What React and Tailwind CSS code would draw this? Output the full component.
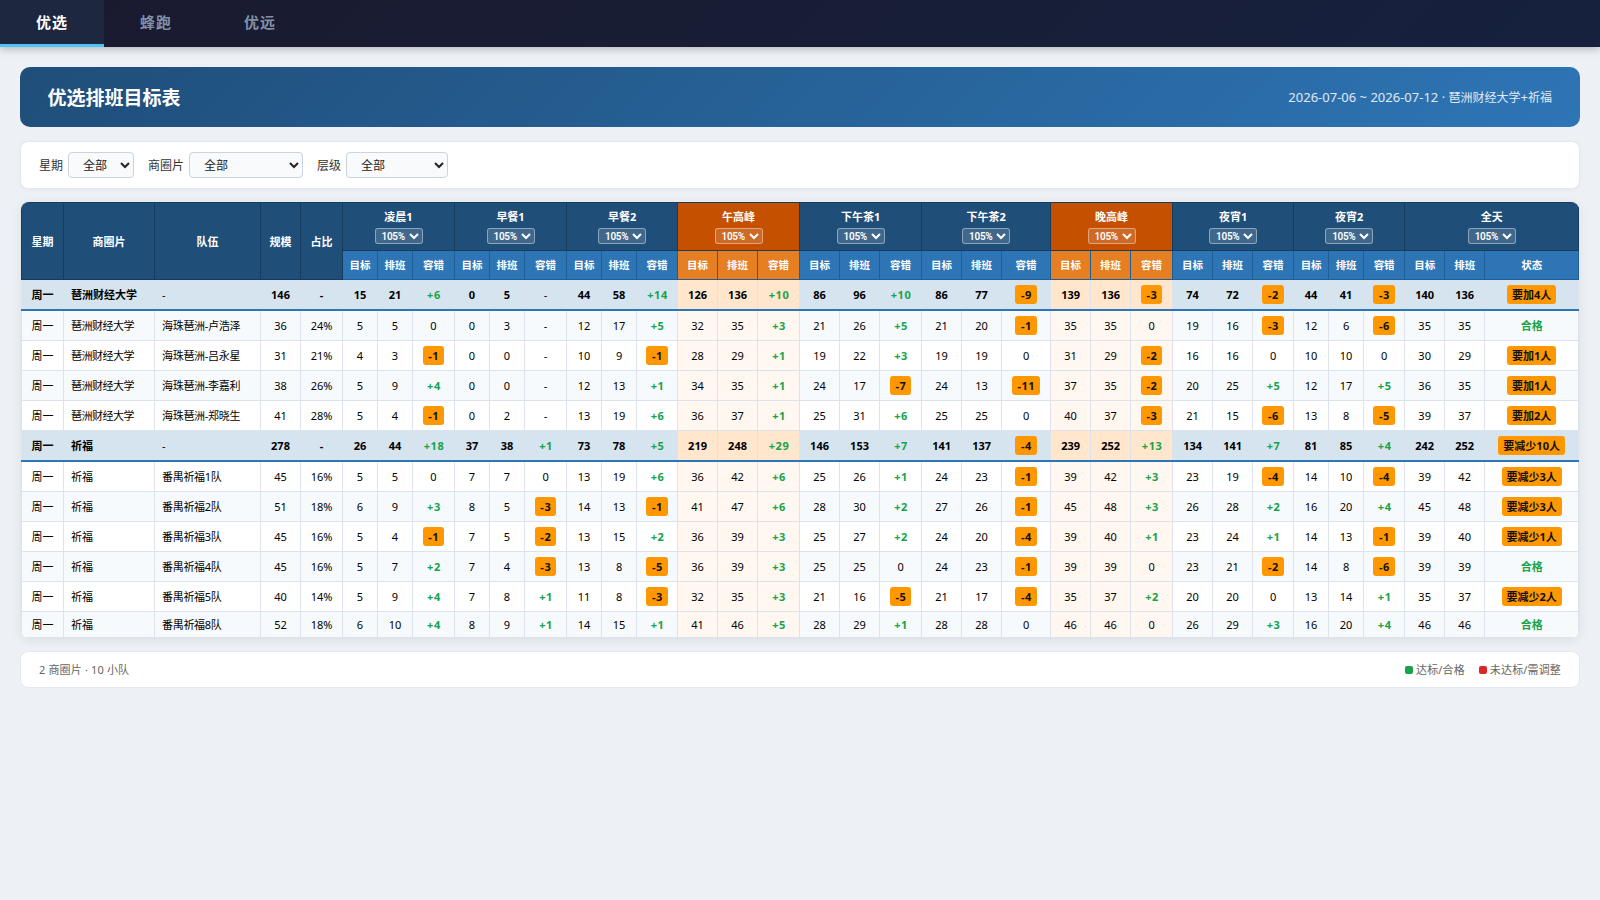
const PERIODS = [
  { name: '凌晨1', peak: false },
  { name: '早餐1', peak: false },
  { name: '早餐2', peak: false },
  { name: '午高峰', peak: true },
  { name: '下午茶1', peak: false },
  { name: '下午茶2', peak: false },
  { name: '晚高峰', peak: true },
  { name: '夜宵1', peak: false },
  { name: '夜宵2', peak: false },
];

const COLS = [
  42, 91, 106, 40, 42, 35, 35, 42, 35, 35, 42, 35, 35, 41, 40, 40, 42, 40, 40, 42, 40, 40, 49, 40, 40, 42, 40, 40, 41,
  35, 35, 41, 40, 40, 94,
];

const A = '琶洲财经大学';
const B = '祈福';

const ROWS = [
  [A, '-', '146', '-', '15 21 +6 0 5 - 44 58 +14 126 136 +10 86 96 +10 86 77 -9 139 136 -3 74 72 -2 44 41 -3 140 136', '要加4人'],
  [A, '海珠琶洲-卢浩泽', '36', '24%', '5 5 0 0 3 - 12 17 +5 32 35 +3 21 26 +5 21 20 -1 35 35 0 19 16 -3 12 6 -6 35 35', '合格'],
  [A, '海珠琶洲-吕永星', '31', '21%', '4 3 -1 0 0 - 10 9 -1 28 29 +1 19 22 +3 19 19 0 31 29 -2 16 16 0 10 10 0 30 29', '要加1人'],
  [A, '海珠琶洲-李嘉利', '38', '26%', '5 9 +4 0 0 - 12 13 +1 34 35 +1 24 17 -7 24 13 -11 37 35 -2 20 25 +5 12 17 +5 36 35', '要加1人'],
  [A, '海珠琶洲-郑晓生', '41', '28%', '5 4 -1 0 2 - 13 19 +6 36 37 +1 25 31 +6 25 25 0 40 37 -3 21 15 -6 13 8 -5 39 37', '要加2人'],
  [B, '-', '278', '-', '26 44 +18 37 38 +1 73 78 +5 219 248 +29 146 153 +7 141 137 -4 239 252 +13 134 141 +7 81 85 +4 242 252', '要减少10人'],
  [B, '番禺祈福1队', '45', '16%', '5 5 0 7 7 0 13 19 +6 36 42 +6 25 26 +1 24 23 -1 39 42 +3 23 19 -4 14 10 -4 39 42', '要减少3人'],
  [B, '番禺祈福2队', '51', '18%', '6 9 +3 8 5 -3 14 13 -1 41 47 +6 28 30 +2 27 26 -1 45 48 +3 26 28 +2 16 20 +4 45 48', '要减少3人'],
  [B, '番禺祈福3队', '45', '16%', '5 4 -1 7 5 -2 13 15 +2 36 39 +3 25 27 +2 24 20 -4 39 40 +1 23 24 +1 14 13 -1 39 40', '要减少1人'],
  [B, '番禺祈福4队', '45', '16%', '5 7 +2 7 4 -3 13 8 -5 36 39 +3 25 25 0 24 23 -1 39 39 0 23 21 -2 14 8 -6 39 39', '合格'],
  [B, '番禺祈福5队', '40', '14%', '5 9 +4 7 8 +1 11 8 -3 32 35 +3 21 16 -5 21 17 -4 35 37 +2 20 20 0 13 14 +1 35 37', '要减少2人'],
  [B, '番禺祈福8队', '52', '18%', '6 10 +4 8 9 +1 14 15 +1 41 46 +5 28 29 +1 28 28 0 46 46 0 26 29 +3 16 20 +4 46 46', '合格'],
];

const ROW_HEIGHTS = ['h-[30px]', 'h-[31px]', 'h-[30px]', 'h-[30px]', 'h-[30px]', 'h-[30px]', 'h-[31px]', 'h-[30px]', 'h-[30px]', 'h-[30px]', 'h-[30px]', 'h-[26px]'];

const NUDGED = [0, 1, 5, 6];

function Badge({ children }) {
  return (
    <span className="inline-block h-[19px] rounded-[3px] bg-[#ff9800] px-[5px] align-middle font-bold leading-[19px] text-[#111]">
      {children}
    </span>
  );
}

function Tolerance({ value }) {
  if (value.length > 1 && value[0] === '-')
    return (
      <Badge>
        <span className="ml-[0.5px] tracking-[0.5px]">{value}</span>
      </Badge>
    );
  if (value[0] === '+') return <span className="ml-[1px] font-bold tracking-[0.6px] text-[#16a34a]">{value}</span>;
  return <span className="font-normal">{value}</span>;
}

function PercentSelect() {
  return (
    <select className="block h-4 w-12 rounded-[3px] border border-white/40 bg-white/15 py-0 pr-0 pl-[2px] font-['Roboto',sans-serif] text-[10px] font-semibold leading-none tracking-[-0.3px] text-white">
      <option>105%</option>
    </select>
  );
}

function GroupHead({ name, peak }) {
  return (
    <th
      colSpan={3}
      className={'border border-[#163d5f] p-0 align-top font-bold ' + (peak ? 'bg-[#c55100]' : 'bg-[#1f4e79]')}
    >
      <div className="flex flex-col items-center gap-[3px] pt-[6px]">
        <span className="h-4 leading-4">{name}</span>
        <PercentSelect />
      </div>
    </th>
  );
}

function SubHead({ children, peak }) {
  return (
    <th
      className={
        'border border-[#1f5f99] p-0 text-center text-[10.5px] font-bold ' + (peak ? 'bg-[#e67e22]' : 'bg-[#2e75b6]')
      }
    >
      {children}
    </th>
  );
}

function DataRow({ row, index }) {
  const [area, team, size, share, values, status] = row;
  const summary = team === '-';
  const base =
    'border border-[#dde3ec] px-0 pb-0 text-center ' +
    (NUDGED.includes(index) ? 'pt-[1px] ' : 'pt-0 ') +
    (summary ? 'border-b-2 border-b-[#2e75b6] font-bold ' : '');
  const plain = summary ? 'bg-[#d6e4f0]' : index % 2 ? 'bg-[#f7fafd]' : 'bg-white';
  const peakBg = summary ? 'bg-[#ffe6cc]' : 'bg-[#fff7f0]';
  return (
    <tr className={ROW_HEIGHTS[index]}>
      <td className={base + plain}>周一</td>
      <td className={base + plain}>
        <div className={'pl-[7px] text-left ' + (area === A && !summary ? 'tracking-[-0.5px]' : '')}>{area}</div>
      </td>
      <td className={base + plain}>
        <div className="pl-[7px] text-left font-normal tracking-[-0.3px]">{team}</div>
      </td>
      <td className={base + plain}>{size}</td>
      <td className={base + plain}>{share}</td>
      {values.split(' ').map((v, i) => {
        const group = Math.floor(i / 3);
        const peak = group === 3 || group === 6;
        return (
          <td key={i} className={base + (peak ? peakBg : plain)}>
            {i % 3 === 2 ? <Tolerance value={v} /> : v}
          </td>
        );
      })}
      <td className={base + plain}>
        {status === '合格' ? <span className="font-bold text-[#16a34a]">{status}</span> : <Badge>{status}</Badge>}
      </td>
    </tr>
  );
}

function Filter({ label, width }) {
  return (
    <label className="flex items-center gap-[5px] text-[#333]">
      <span className="pt-[2px]">{label}</span>
      <select
        className={
          'h-[26px] rounded-[4px] border border-[#cbd2e0] bg-[#f9fafc] px-[10px] text-xs text-[#222] ' + width
        }
      >
        <option>全部</option>
      </select>
    </label>
  );
}

export default function App() {
  const tabs = ['优选', '蜂跑', '优远'];
  return (
    <div className="min-h-screen bg-[#edf0f5] font-['Noto_Sans','Noto_Sans_CJK_SC',sans-serif] text-black">
      <nav className="relative flex h-[47px] bg-[linear-gradient(135deg,#1a1a2e,#16213e)] shadow-[0_2px_8px_rgba(0,0,0,0.25)]">
        {tabs.map((tab, i) => (
          <div
            key={tab}
            className={
              'flex w-[104px] items-center justify-center border-b-[3px] text-[15px] font-semibold tracking-[1px] ' +
              (i === 0
                ? 'border-[#4fc3f7] bg-[#1e2740] text-white'
                : 'border-transparent text-[#8090a8]')
            }
          >
            {tab}
          </div>
        ))}
      </nav>
      <main className="flex flex-col px-5 pt-5">
        <header className="flex h-[60px] items-center justify-between rounded-[10px] bg-[linear-gradient(135deg,#1f4e79,#2e75b6)] px-7 pt-[2px] text-white">
          <h1 className="-ml-[0.5px] text-[19px] font-bold">优选排班目标表</h1>
          <div className="text-[13px] text-white/85">
            2026-07-06 ~ 2026-07-12 · <span className="text-[12px]">琶洲财经大学</span>+
            <span className="text-[12px]">祈福</span>
          </div>
        </header>
        <section className="mt-[14px] flex h-12 items-center gap-[14px] rounded-lg border border-[#e2e8f0] bg-white px-[18px] text-xs shadow-[0_1px_4px_rgba(0,0,0,0.04)]">
          <Filter label="星期" width="w-[66px]" />
          <Filter label="商圈片" width="w-[114px]" />
          <Filter label="层级" width="w-[102px]" />
        </section>
        <section className="mx-px mt-[13px] overflow-hidden rounded-lg shadow-[0_2px_12px_rgba(0,0,0,0.08)]">
          <table className="w-[1558px] table-fixed border-collapse text-[11px] leading-4">
            <colgroup>
              {COLS.map((w, i) => (
                <col key={i} style={{ width: w }} />
              ))}
            </colgroup>
            <thead className="text-white">
              <tr className="h-12">
                {['星期', '商圈片', '队伍', '规模', '占比'].map((h) => (
                  <th
                    key={h}
                    rowSpan={2}
                    className="border border-[#163d5f] bg-[#1f4e79] px-0 pt-[2px] pb-0 text-center font-bold"
                  >
                    {h}
                  </th>
                ))}
                {PERIODS.map((p) => (
                  <GroupHead key={p.name} name={p.name} peak={p.peak} />
                ))}
                <GroupHead name="全天" peak={false} />
              </tr>
              <tr className="h-[29px]">
                {PERIODS.flatMap((p) =>
                  ['目标', '排班', '容错'].map((h) => (
                    <SubHead key={p.name + h} peak={p.peak}>
                      {h}
                    </SubHead>
                  )),
                )}
                <SubHead>目标</SubHead>
                <SubHead>排班</SubHead>
                <SubHead>状态</SubHead>
              </tr>
            </thead>
            <tbody>
              {ROWS.map((row, i) => (
                <DataRow key={i} row={row} index={i} />
              ))}
            </tbody>
          </table>
        </section>
        <footer className="mt-[13px] flex h-[37px] items-center justify-between rounded-lg border border-[#e2e8f0] bg-white px-[18px] pt-px text-[11px] tracking-[0.15px] text-[#666]">
          <span>2 商圈片 · 10 小队</span>
          <div className="flex gap-[14px]">
            <span className="flex items-center gap-[3px]">
              <i className="size-2 rounded-[2px] bg-[#16a34a]" />
              达标/合格
            </span>
            <span className="flex items-center gap-[3px]">
              <i className="size-2 rounded-[2px] bg-[#dc2626]" />
              未达标/需调整
            </span>
          </div>
        </footer>
      </main>
    </div>
  );
}
